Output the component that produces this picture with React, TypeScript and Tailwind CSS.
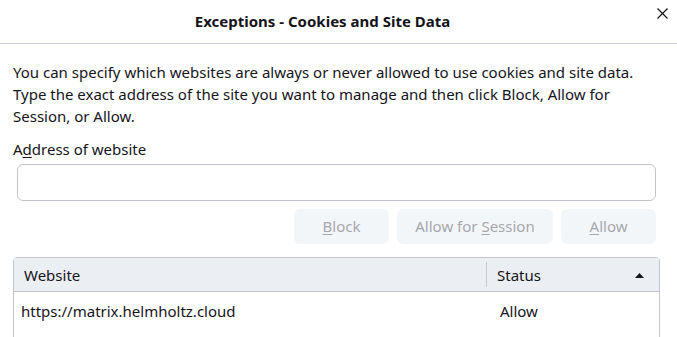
const font = { fontFamily: '"Noto Sans", "Open Sans", sans-serif' };

export default function App() {
  return (
    <div className="w-[677px] h-[337px] overflow-hidden bg-white text-[#15141a]" style={font}>
      {/* Title bar */}
      <div className="relative h-[44px] border-b border-[#cfcfd8] flex items-center justify-center">
        <span className="text-[15px] font-bold pr-[32px]">Exceptions - Cookies and Site Data</span>
        <button className="absolute left-[657px] top-[8px] w-[11px] h-[11px] flex items-center justify-center">
          <svg width="11" height="11" viewBox="0 0 11 11">
            <path d="M0.5 0.5 L10.5 10.5 M10.5 0.5 L0.5 10.5" stroke="#15141a" strokeWidth="1.2" fill="none" />
          </svg>
        </button>
      </div>

      <div className="pl-[13px] pr-[17px] pt-[17px]">
        <p className="text-[15px] leading-[22px]">
          You can specify which websites are always or never allowed to use cookies and site data. Type the exact address of the site you want to manage and then click Block, Allow for Session, or Allow.
        </p>

        <label className="block mt-[11px] text-[15px] leading-[22px]">
          A<span className="underline underline-offset-2">d</span>dress of website
        </label>

        <div className="ml-[4px] mr-[4px] mt-[4px]">
          <input className="w-full h-[37px] rounded-[6px] border border-[#c3c3cb] outline-none px-2" />
        </div>

        <div className="flex justify-end gap-[8px] mt-[8px] mr-[4px]">
          <button className="h-[35px] w-[95px] rounded-[6px] bg-[#f3f6f9] text-[#a7a7ae] text-[15px]">
            <span className="underline underline-offset-2">B</span>lock
          </button>
          <button className="h-[35px] w-[156px] rounded-[6px] bg-[#f3f6f9] text-[#a7a7ae] text-[15px]">
            Allow for <span className="underline underline-offset-2">S</span>ession
          </button>
          <button className="h-[35px] w-[95px] rounded-[6px] bg-[#f3f6f9] text-[#a7a7ae] text-[15px]">
            <span className="underline underline-offset-2">A</span>llow
          </button>
        </div>

        <div className="mt-[13px] border border-[#c3c3cb] rounded-t-[4px] h-[100px]">
          <div className="flex h-[34px] bg-[#ebeff3] border-b border-[#c3c3cb] text-[15px]">
            <div className="flex-1 flex items-center pl-[10px] pt-[1px]">Website</div>
            <div className="my-[4px] w-px bg-[#c8c8cf]" />
            <div className="w-[172px] flex items-center justify-between pl-[10px] pr-[15px] pt-[1px]">
              <span>Status</span>
              <svg width="9" height="5" viewBox="0 0 9 5"><path d="M0 5 L4.5 0 L9 5 Z" fill="#15141a" /></svg>
            </div>
          </div>
          <div className="flex h-[37px] text-[15px]">
            <div className="flex-1 flex items-center pl-[7px] pt-[1px]">https://matrix.helmholtz.cloud</div>
            <div className="w-[172px] flex items-center pl-[13px] pt-[1px]">Allow</div>
          </div>
        </div>
      </div>
    </div>
  );
}
